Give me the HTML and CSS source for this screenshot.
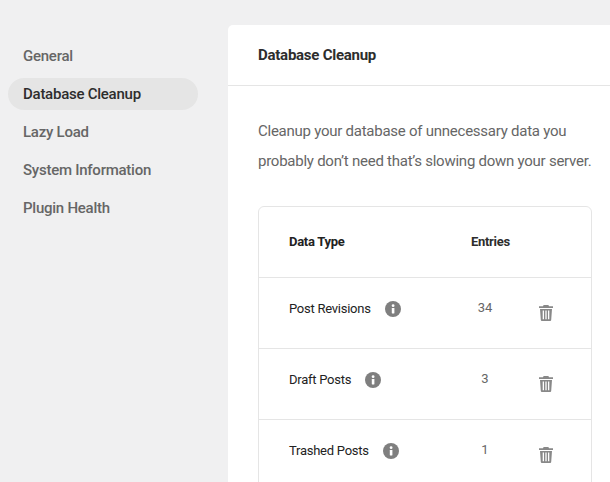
FILE: index.html
```html
<!DOCTYPE html>
<html lang="en">
<head>
  <meta charset="UTF-8">
  <title>Database Cleanup</title>
  <link rel="stylesheet" href="styles.css">
</head>
<body>
  <div class="layout">
    <nav class="side-nav">
      <a class="nav-item">General</a>
      <a class="nav-item active">Database Cleanup</a>
      <a class="nav-item">Lazy Load</a>
      <a class="nav-item">System Information</a>
      <a class="nav-item">Plugin Health</a>
    </nav>

    <main class="panel">
      <div class="panel-head">Database Cleanup</div>
      <div class="panel-body">
        <p class="intro">Cleanup your database of unnecessary data you<br>probably don’t need that’s slowing down your server.</p>

        <div class="table">
          <div class="row head-row">
            <div class="col-type"><span class="label">Data Type</span></div>
            <div class="col-entries"><span class="label">Entries</span></div>
          </div>
          <div class="row">
            <div class="col-type"><span class="label">Post Revisions</span>
              <svg class="info" viewBox="0 0 16 16"><circle cx="8" cy="8" r="8"/><rect class="info-mark" x="6.8" y="7" width="2.6" height="5.4" rx=".4"/><circle class="info-mark" cx="8.1" cy="4.7" r="1.4"/></svg>
            </div>
            <div class="col-entries count">34</div>
            <svg class="trash" viewBox="0 0 14 16"><path d="M4.6 0h4.8l.6 1.2H14v1.7H0V1.2h4z"/><path fill-rule="evenodd" d="M1 4h12l-.8 11a1.1 1.1 0 0 1-1.1 1H2.900a1.100 1.100 0 0 1-1.100-1zM3.700 5.500v8.800h1.300V5.500zM6.350 5.500v8.800h1.300V5.500zM9 5.500v8.800h1.300V5.500z"/></svg>
          </div>
          <div class="row">
            <div class="col-type"><span class="label">Draft Posts</span>
              <svg class="info" viewBox="0 0 16 16"><circle cx="8" cy="8" r="8"/><rect class="info-mark" x="6.8" y="7" width="2.6" height="5.4" rx=".4"/><circle class="info-mark" cx="8.1" cy="4.7" r="1.4"/></svg>
            </div>
            <div class="col-entries count">3</div>
            <svg class="trash" viewBox="0 0 14 16"><path d="M4.6 0h4.8l.6 1.2H14v1.7H0V1.2h4z"/><path fill-rule="evenodd" d="M1 4h12l-.8 11a1.1 1.1 0 0 1-1.1 1H2.900a1.100 1.100 0 0 1-1.100-1zM3.700 5.500v8.800h1.300V5.500zM6.350 5.500v8.800h1.300V5.500zM9 5.500v8.800h1.300V5.500z"/></svg>
          </div>
          <div class="row">
            <div class="col-type"><span class="label">Trashed Posts</span>
              <svg class="info" viewBox="0 0 16 16"><circle cx="8" cy="8" r="8"/><rect class="info-mark" x="6.8" y="7" width="2.6" height="5.4" rx=".4"/><circle class="info-mark" cx="8.1" cy="4.7" r="1.4"/></svg>
            </div>
            <div class="col-entries count">1</div>
            <svg class="trash" viewBox="0 0 14 16"><path d="M4.6 0h4.8l.6 1.2H14v1.7H0V1.2h4z"/><path fill-rule="evenodd" d="M1 4h12l-.8 11a1.1 1.1 0 0 1-1.1 1H2.900a1.100 1.100 0 0 1-1.100-1zM3.700 5.500v8.800h1.300V5.500zM6.350 5.500v8.800h1.300V5.500zM9 5.500v8.800h1.300V5.500z"/></svg>
          </div>
        </div>
      </div>
    </main>
  </div>
</body>
</html>
```

FILE: styles.css
```css
html, body {
  height: 100%;
  overflow: hidden;
}

body {
  margin: 0;
  background-color: #f0f0f1;
  font-family: Roboto, sans-serif;
  color: #2d2d2d;
}

.layout {
  display: flex;
  align-items: flex-start;
  padding-top: 25px;
  height: 100%;
  box-sizing: border-box;
}

.side-nav {
  width: 190px;
  margin: 15px 30px 0 8px;
  display: flex;
  flex-direction: column;
  gap: 6px;
}

.nav-item {
  height: 32px;
  line-height: 32px;
  padding-left: 15px;
  border-radius: 16px;
  font-size: 15px;
  font-weight: 500;
  letter-spacing: -.25px;
  color: #666;
}

.nav-item.active {
  background-color: #e5e5e5;
  color: #2d2d2d;
}

.panel {
  flex: 1;
  min-width: 0;
  background-color: #fff;
  border-radius: 5px 0 0 0;
  height: 457px;
  overflow: hidden;
}

.panel-head {
  height: 60px;
  line-height: 60px;
  padding-left: 30px;
  border-bottom: 1px solid #e5e5e5;
  font-size: 15px;
  font-weight: 700;
  letter-spacing: -.25px;
}

.panel-body {
  padding: 30px 18px 0 30px;
}

.intro {
  margin: 0 0 30px;
  font-size: 15px;
  line-height: 30px;
  letter-spacing: -.25px;
  white-space: nowrap;
  color: #666;
}

.table {
  border: 1px solid #e5e5e5;
  border-radius: 6px;
}

.row {
  display: flex;
  height: 70px;
  align-items: center;
  border-top: 1px solid #e5e5e5;
  font-size: 13px;
}

.head-row {
  border-top: 0;
}

.col-type {
  width: 212px;
  padding-left: 30px;
  box-sizing: border-box;
  display: flex;
  align-items: center;
  gap: 14px;
  margin-bottom: 8px;
  letter-spacing: -.25px;
  color: #222;
}

.label {
  margin-bottom: 2px;
}

.head-row .col-type,
.head-row .col-entries {
  margin-bottom: 0;
  font-weight: 700;
  letter-spacing: -.3px;
}

.col-entries {
  display: block;
  width: 28px;
  white-space: nowrap;
}

.head-row .col-entries .label {
  display: block;
}

.count {
  margin-bottom: 12px;
  text-align: center;
  color: #666;
}

.info {
  width: 16px;
  height: 16px;
  fill: #7f7f7f;
}

.info-mark {
  fill: #fff;
}

.trash {
  width: 14px;
  height: 16px;
  margin-left: 40px;
  fill: #888;
}
```
